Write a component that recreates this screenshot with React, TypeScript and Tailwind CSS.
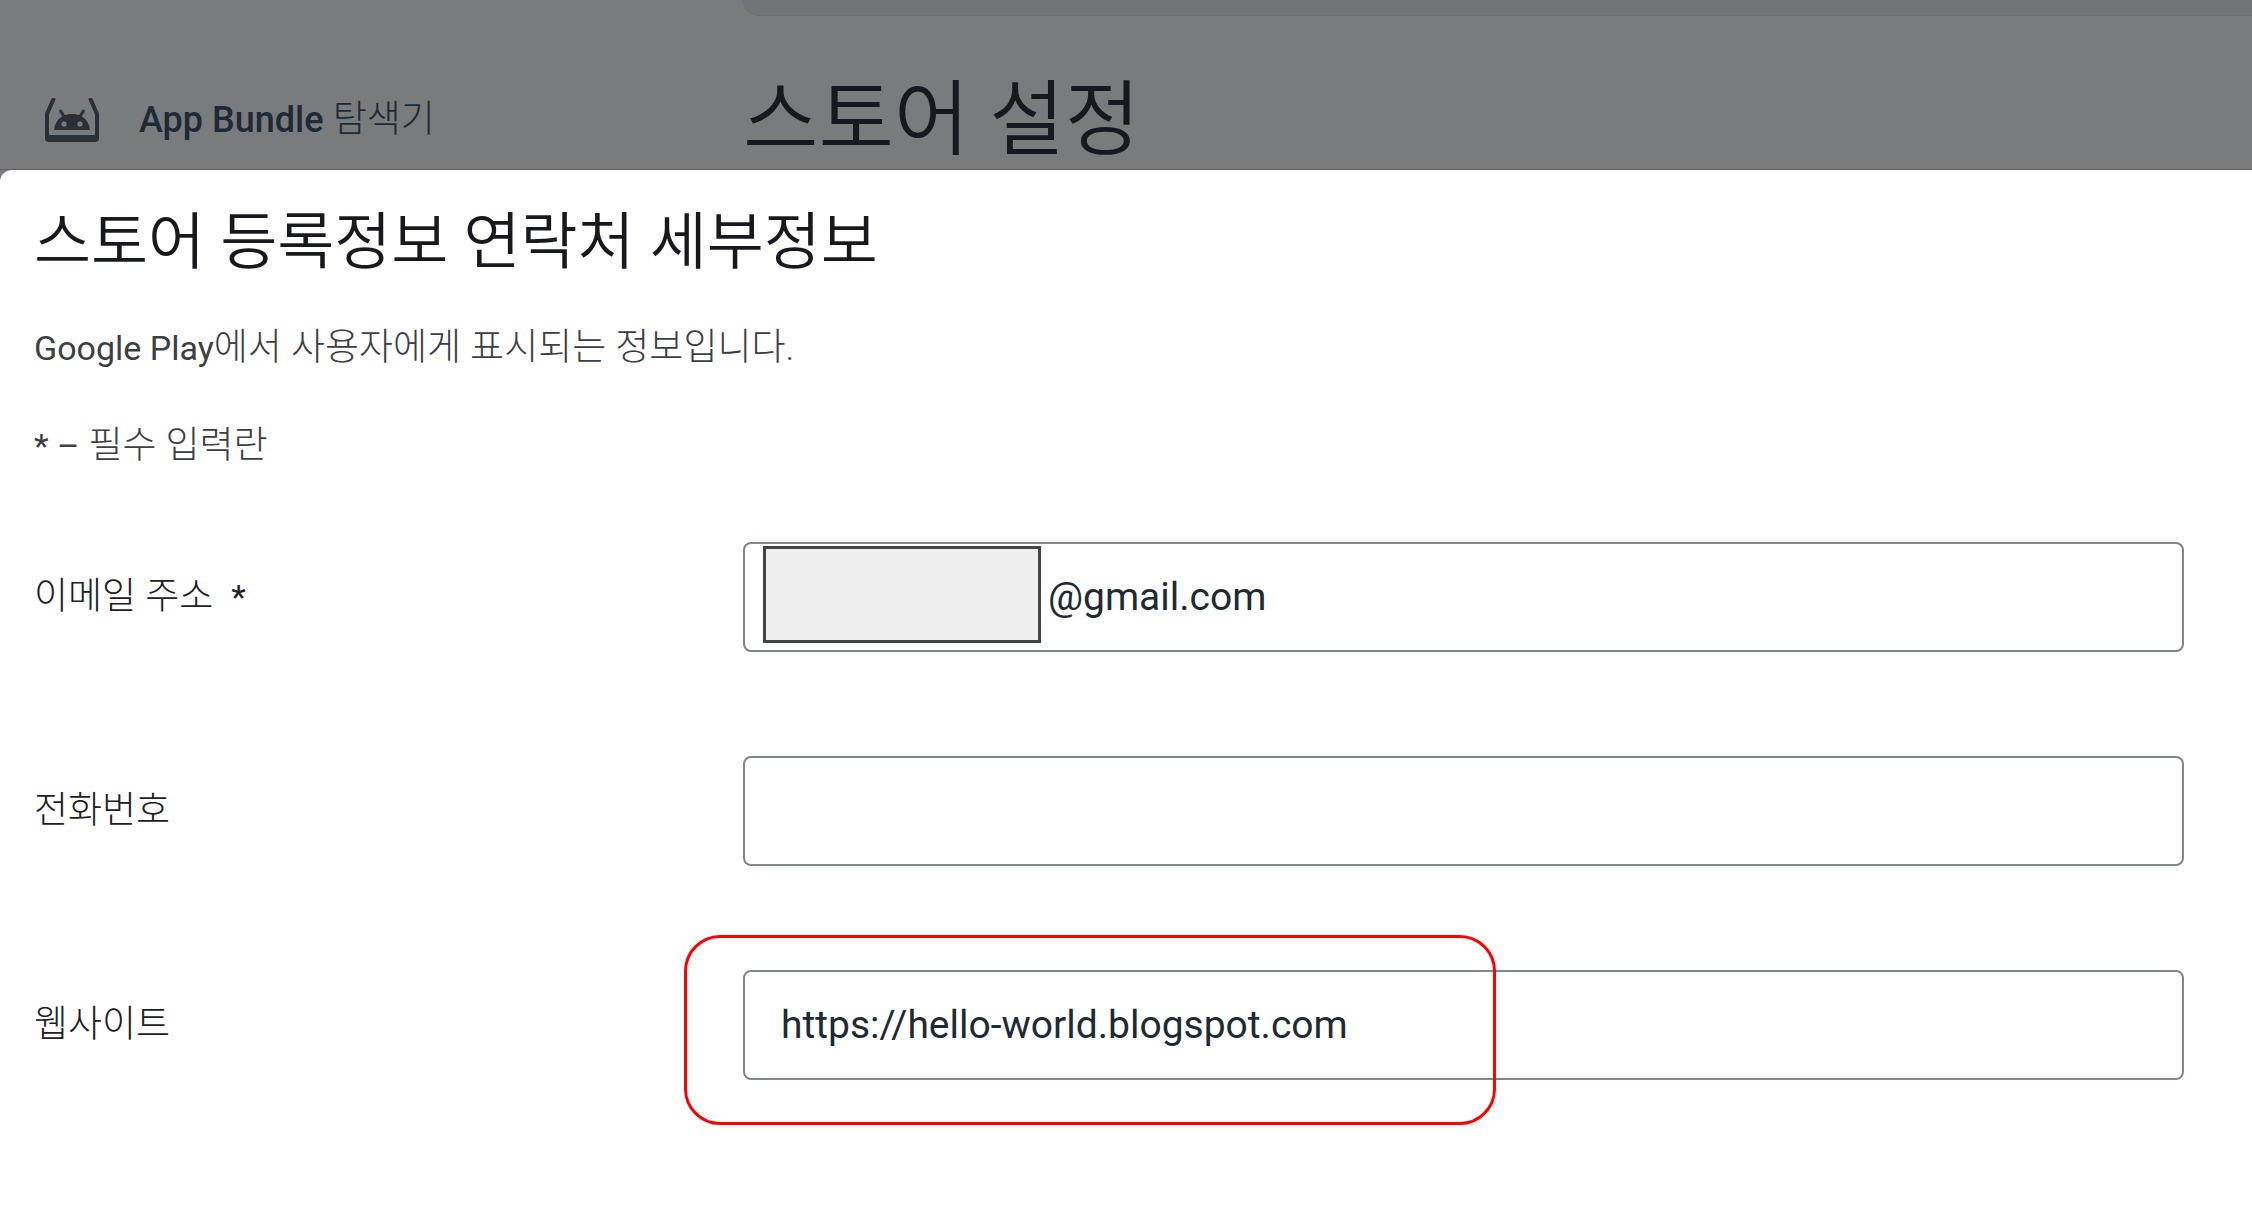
import React, { useState } from 'react';

interface FieldRowProps {
  id: string;
  label: string;
  type: string;
  value: string;
  onChange: (value: string) => void;
  required?: boolean;
  masked?: boolean;
  highlighted?: boolean;
}

const BundleIcon: React.FC = () => (
  <svg viewBox="0 0 54 44" className="w-[54px] h-11 shrink-0" fill="none" aria-hidden="true">
    <path d="M9 0 L2 16 V40 Q2 42 4 42 H50 Q52 42 52 40 V16 L45 0" stroke="#2b3036" strokeWidth="4" />
    <path d="M1 37 H53 V40 Q53 44 49 44 H5 Q1 44 1 40 Z" fill="#2b3036" />
    <path d="M15 12 L20 20 M39 12 L34 20" stroke="#2b3036" strokeWidth="3" />
    <path d="M9 32 C10 22 17 16 27 16 C37 16 44 22 45 32 Z" fill="#2b3036" />
    <circle cx="19" cy="26" r="2.6" fill="#7a7b7d" />
    <circle cx="35" cy="26" r="2.6" fill="#7a7b7d" />
  </svg>
);

const FieldRow: React.FC<FieldRowProps> = ({ id, label, type, value, onChange, required, masked, highlighted }) => (
  <div className="flex items-center">
    <label htmlFor={id} className="w-[709px] shrink-0 text-[37px] leading-[48px] font-light text-[#202124]">
      {label}
      {required && <span className="ml-[18px] text-[34px] font-normal">*</span>}
    </label>
    <div className="relative flex-1">
      <input
        id={id}
        type={type}
        value={value}
        required={required}
        onChange={(e) => onChange(e.target.value)}
        className={`block w-full h-[110px] rounded-lg border-2 border-[#80868b] bg-white pr-9 text-[39px] text-[#202a33] outline-none ${
          masked ? 'pl-[303px]' : 'pl-9'
        }`}
      />
      {masked && (
        <div className="absolute left-5 top-1 w-[278px] h-[97px] border-[3px] border-[#444444] bg-[#eeeeee]" />
      )}
      {highlighted && (
        <div className="pointer-events-none absolute -left-[59px] -top-[35px] w-[812px] h-[190px] rounded-[36px] border-[3px] border-[#ff0000]" />
      )}
    </div>
  </div>
);

export default function App() {
  const [email, setEmail] = useState('@gmail.com');
  const [phone, setPhone] = useState('');
  const [website, setWebsite] = useState('https://hello-world.blogspot.com');

  return (
    <div className="min-h-screen flex flex-col bg-[#7a7b7d] font-[Roboto,'Noto_Sans_CJK_KR',sans-serif]">
      {/* dimmed page behind the dialog */}
      <div className="h-[170px] flex overflow-hidden border-b border-[#5f6063]">
        <nav className="w-[743px] shrink-0 pt-[92px] pl-[45px]">
          <a href="#bundle" className="flex items-center gap-10 text-[37px] leading-[56px] text-[#202a36]">
            <BundleIcon />
            <span>
              <span className="text-[36px] font-medium">App Bundle</span> <span className="font-light">탐색기</span>
            </span>
          </a>
        </nav>
        <div className="flex-1">
          <div className="h-4 rounded-bl-[20px] border-b border-[#6d6e73] bg-[#737478]" />
          <h1 className="pt-11 text-[82px] leading-[120px] font-[350] text-[#17191e]">스토어 설정</h1>
        </div>
      </div>

      <main role="dialog" aria-labelledby="dialog-title" className="flex-1 rounded-tl-xl bg-white pt-7 pl-[34px] pr-[68px] pb-20">
        <h2 id="dialog-title" className="text-[62px] leading-[90px] font-[350] text-[#17191e]">
          스토어 등록정보 연락처 세부정보
        </h2>
        <p className="mt-9 text-[37px] leading-[48px] font-light text-[#3c4043]">
          <span className="text-[34px] font-normal">Google Play</span>에서 사용자에게 표시되는 정보입니다.
        </p>
        <p className="mt-[50px] text-[37px] leading-[48px] font-light text-[#3c4043]">
          <span className="text-[34px] font-normal">* –</span> 필수 입력란
        </p>
        <form className="mt-[72px] flex flex-col gap-[104px]">
          <FieldRow id="email" label="이메일 주소" type="text" value={email} onChange={setEmail} required masked />
          <FieldRow id="phone" label="전화번호" type="tel" value={phone} onChange={setPhone} />
          <FieldRow id="website" label="웹사이트" type="url" value={website} onChange={setWebsite} highlighted />
        </form>
      </main>
    </div>
  );
}
